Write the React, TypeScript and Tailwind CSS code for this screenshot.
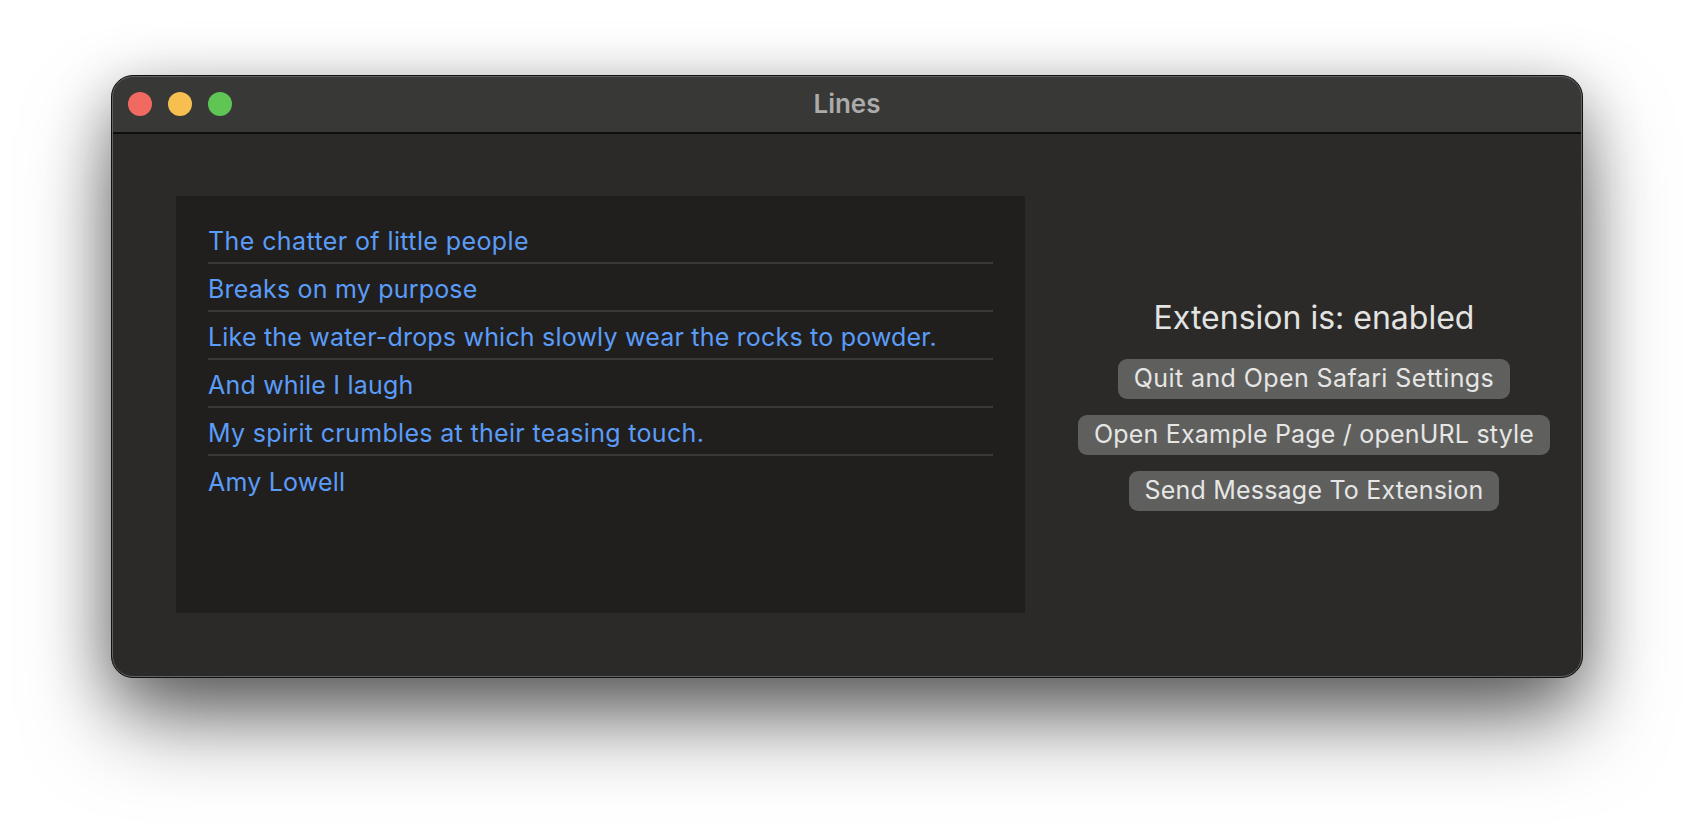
import React from 'react';

const lines = [
  { text: 'The chatter of little people', tracking: 'tracking-[0.4px]' },
  { text: 'Breaks on my purpose', tracking: 'tracking-[0.2px]' },
  { text: 'Like the water-drops which slowly wear the rocks to powder.', tracking: 'tracking-[0.2px]' },
  { text: 'And while I laugh', tracking: 'tracking-[0.2px]' },
  { text: 'My spirit crumbles at their teasing touch.', tracking: 'tracking-[0.33px]' },
  { text: 'Amy Lowell', tracking: 'tracking-[0.2px]' },
];

const actions = [
  { label: 'Quit and Open Safari Settings', tracking: 'tracking-[0.4px]' },
  { label: 'Open Example Page / openURL style', tracking: 'tracking-[0.2px]' },
  { label: 'Send Message To Extension', tracking: 'tracking-[0.2px]' },
];

export default function App() {
  return (
    <div className="h-[824px] overflow-hidden bg-white pl-[111px] pt-[75px] font-['Inter','Noto_Sans',sans-serif]">
      <div className="relative flex h-[603px] w-[1472px] flex-col overflow-hidden rounded-[22px] border border-[#111] bg-[#2b2a29] shadow-[0_46px_90px_-8px_rgba(0,0,0,0.55),0_16px_60px_0_rgba(0,0,0,0.3)]">
        <div className="relative flex h-[58px] shrink-0 items-center gap-4 border-b-2 border-[#0e0e0e] bg-[#383837] pl-4">
          <span className="h-6 w-6 rounded-full bg-[#f16a60]" />
          <span className="h-6 w-6 rounded-full bg-[#f6bf4f]" />
          <span className="h-6 w-6 rounded-full bg-[#5fc655]" />
          <span className="absolute inset-x-0 -mt-[2px] text-center text-[26px] font-semibold text-[#ababaa]">Lines</span>
        </div>
        <div className="flex flex-1 pl-16 pt-[62px]">
          <div className="h-[417px] w-[849px] shrink-0 bg-[#201f1e] px-8 pt-5">
            {lines.map((line, i) => (
              <div
                key={line.text}
                className={`flex h-12 items-center pt-[6px] text-[25px] text-[#5b9cf8] ${line.tracking} ${i < lines.length - 1 ? 'border-b-2 border-[#3a3938]' : ''}`}
              >
                {line.text}
              </div>
            ))}
          </div>
          <div className="ml-[21px] flex h-[417px] flex-1 flex-col items-center justify-center">
            <div className="mb-[21px] text-[32px] leading-[40px] text-[#e3e3e2]">Extension is: enabled</div>
            <div className="flex flex-col items-center gap-4">
              {actions.map(action => (
                <button
                  key={action.label}
                  className={`flex h-10 items-center rounded-[9px] bg-[#5f5f5e] px-4 text-[25px] text-[#e6e6e5] ${action.tracking}`}
                >
                  {action.label}
                </button>
              ))}
            </div>
          </div>
        </div>
        {/* light hairline just inside the dark window edge */}
        <div className="pointer-events-none absolute inset-0 rounded-[21px] border border-[#626262]" />
      </div>
    </div>
  );
}
